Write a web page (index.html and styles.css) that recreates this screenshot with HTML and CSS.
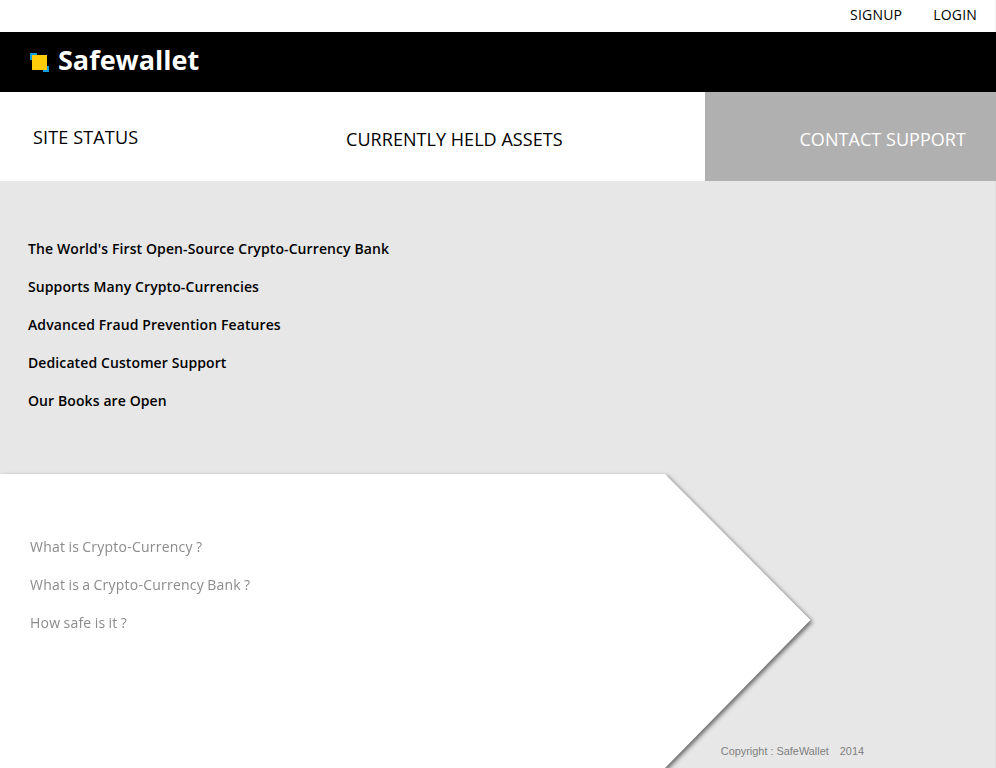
FILE: index.html
```html
<!DOCTYPE html>
<html lang="en">
<head>
<meta charset="utf-8">
<title>Safewallet</title>
<link rel="stylesheet" href="styles.css">
</head>
<body>
<div class="page">
  <div class="topbar">
    <a class="toplink">SIGNUP</a>
    <a class="toplink">LOGIN</a>
  </div>
  <header class="brandbar">
    <svg class="logo" width="20" height="20" viewBox="0 0 20 20" aria-hidden="true">
      <rect x="0" y="0" width="19" height="19" fill="#0f9fe0"/>
      <rect x="7" y="0" width="12" height="2" fill="#000"/>
      <rect x="17" y="0" width="2" height="13" fill="#000"/>
      <rect x="0" y="7" width="2" height="12" fill="#000"/>
      <rect x="0" y="17" width="13" height="2" fill="#000"/>
      <rect x="2" y="2" width="15" height="15" fill="#ffcc0a"/>
    </svg>
    <span class="brand">Safewallet</span>
  </header>
  <nav class="mainnav">
    <a class="navitem status">SITE STATUS</a>
    <a class="navitem assets">CURRENTLY HELD ASSETS</a>
    <a class="navitem support">CONTACT SUPPORT</a>
  </nav>
  <section class="hero">
    <p class="feature">The World's First Open-Source Crypto-Currency Bank</p>
    <p class="feature">Supports Many Crypto-Currencies</p>
    <p class="feature">Advanced Fraud Prevention Features</p>
    <p class="feature">Dedicated Customer Support</p>
    <p class="feature">Our Books are Open</p>
  </section>
  <section class="lower">
    <div class="wedge-shadow">
      <div class="wedge">
        <p class="faq">What is Crypto-Currency ?</p>
        <p class="faq">What is a Crypto-Currency Bank ?</p>
        <p class="faq">How safe is it ?</p>
      </div>
    </div>
    <footer class="copyright"><span>Copyright : SafeWallet</span><span>2014</span></footer>
  </section>
</div>
</body>
</html>
```
FILE: styles.css
```css
html, body {
  margin: 0;
  padding: 0;
  background: #fff;
}
body {
  font-family: "Open Sans", "Liberation Sans", sans-serif;
  overflow: hidden;
}
.page {
  width: 996px;
  height: 768px;
  display: flex;
  flex-direction: column;
  overflow: hidden;
}
.topbar {
  height: 32px;
  flex: none;
  display: flex;
  justify-content: flex-end;
  align-items: center;
  gap: 31px;
  padding: 0 18px 4px 0;
  box-sizing: border-box;
  border-right: 1px solid #f2f2f2;
  font-size: 14px;
  letter-spacing: 0.2px;
  color: #000;
}
.brandbar {
  height: 60px;
  flex: none;
  background: #000;
  display: flex;
  align-items: center;
  padding-left: 30px;
  gap: 8px;
}
.logo {
  display: block;
  margin-top: 2px;
}
.brand {
  color: #fff;
  font-size: 27px;
  font-weight: 700;
  line-height: 1;
  margin-top: -6px;
}
.mainnav {
  height: 89px;
  flex: none;
  display: flex;
  font-size: 18px;
  color: #000;
}
.navitem {
  display: flex;
  align-items: center;
  box-sizing: border-box;
  letter-spacing: 0.05px;
}
.status {
  width: 346px;
  padding: 0 0 0 33px;
  letter-spacing: 0.15px;
}
.assets {
  width: 359px;
  padding-top: 4px;
}
.support {
  width: 291px;
  background: #b0b0b0;
  color: #fff;
  justify-content: flex-end;
  padding: 4px 30px 0 0;
}
.hero {
  height: 293px;
  flex: none;
  box-sizing: border-box;
  background: #e7e7e7;
  border-right: 1px solid #dfdfdf;
  padding: 57px 0 0 28px;
}
.feature {
  margin: 0 0 16px;
  font-size: 14px;
  line-height: 22px;
  font-weight: 600;
  letter-spacing: 0.1px;
  color: #000;
}
.lower {
  flex: 1;
  display: grid;
  background: #e7e7e7;
  border-right: 1px solid #dfdfdf;
  border-bottom: 1px solid #dfdfdf;
}
.wedge-shadow {
  grid-area: 1 / 1;
  width: 811px;
  height: 294px;
  filter: drop-shadow(2px 2px 2px rgba(0, 0, 0, 0.55));
}
.wedge {
  height: 100%;
  box-sizing: border-box;
  background: #fff;
  clip-path: polygon(0 0, 665px 0, 810.5px 146px, 665px 294px, 0 294px);
  padding: 62px 0 0 30px;
}
.faq {
  margin: 0 0 16px;
  font-size: 14px;
  line-height: 22px;
  letter-spacing: 0.22px;
  word-spacing: -0.6px;
  color: #8b8b8b;
}
.copyright {
  grid-area: 1 / 1;
  align-self: end;
  justify-self: end;
  display: flex;
  gap: 11px;
  padding: 0 131px 10px 0;
  font-family: "Liberation Sans", Arial, sans-serif;
  font-size: 10.9px;
  line-height: 14px;
  color: #808080;
}
```
